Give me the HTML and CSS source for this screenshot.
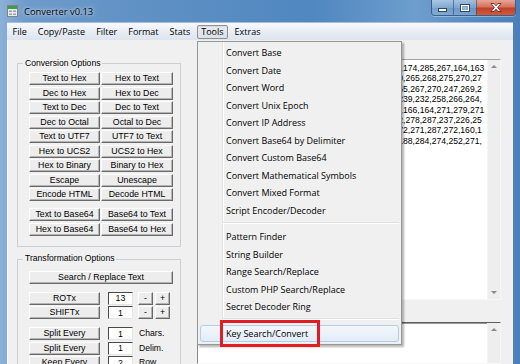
FILE: index.html
```html
<!DOCTYPE html>
<html lang="en">
<head>
    <meta charset="UTF-8">
    <title>Converter v0.13</title>
    <link rel="stylesheet" href="styles.css">
</head>
<body>
<div class="window">
    <div class="titlebar">
        <svg class="app-icon" width="11" height="12" viewBox="0 0 11 12">
            <rect x="0.5" y="0.5" width="10" height="11" fill="#e9ebec" stroke="#7d8386"/>
            <rect x="1" y="1" width="9" height="3" fill="#3f9d4a"/>
            <rect x="2" y="5.5" width="3" height="1.5" fill="#9aa1a5"/>
            <rect x="6" y="5.5" width="3" height="1.5" fill="#9aa1a5"/>
            <rect x="2" y="8.5" width="3" height="1.5" fill="#9aa1a5"/>
            <rect x="6" y="8.5" width="3" height="1.5" fill="#9aa1a5"/>
        </svg>
        <span class="title">Converter v0.13</span>
        <div class="caption">
            <span class="cap min"><svg width="9" height="4" viewBox="0 0 9 4"><rect x="0.5" y="0.5" width="8" height="3" fill="#fff" stroke="#33475e"/></svg></span>
            <span class="cap max"><svg width="10" height="8" viewBox="0 0 10 8"><rect x="0.5" y="0.5" width="9" height="7" fill="none" stroke="#33475e"/><rect x="1.5" y="1.5" width="7" height="5" fill="none" stroke="#fff"/><rect x="2.5" y="3" width="5" height="3" fill="#9fb6cf"/></svg></span>
            <span class="cap close"><svg width="12" height="9" viewBox="0 0 12 9"><path d="M1 0.5h3l2 2.3 2-2.3h3l-3.4 4 3.4 4h-3l-2-2.3-2 2.3h-3l3.4-4z" fill="#fff" stroke="#5a1d14" stroke-width="0.8"/></svg></span>
        </div>
    </div>
    <div class="frame">
        <div class="client">
            <ul class="menubar">
                <li>File</li>
                <li>Copy/Paste</li>
                <li>Filter</li>
                <li>Format</li>
                <li>Stats</li>
                <li class="open">Tools
                    <ul class="dropdown">
                        <li>Convert Base</li>
                        <li>Convert Date</li>
                        <li>Convert Word</li>
                        <li>Convert Unix Epoch</li>
                        <li>Convert IP Address</li>
                        <li>Convert Base64 by Delimiter</li>
                        <li>Convert Custom Base64</li>
                        <li>Convert Mathematical Symbols</li>
                        <li>Convert Mixed Format</li>
                        <li>Script Encoder/Decoder</li>
                        <li class="sep"></li>
                        <li>Pattern Finder</li>
                        <li>String Builder</li>
                        <li>Range Search/Replace</li>
                        <li>Custom PHP Search/Replace</li>
                        <li>Secret Decoder Ring</li>
                        <li class="sep"></li>
                        <li class="hover">Key Search/Convert<span class="mark"></span></li>
                    </ul>
                </li>
                <li>Extras</li>
            </ul>
            <div class="main">
                <div class="sidebar">
                    <div class="group">
                        <span class="group-title">Conversion Options</span>
                        <div class="btn-grid">
                            <button>Text to Hex</button><button>Hex to Text</button>
                            <button>Dec to Hex</button><button>Hex to Dec</button>
                            <button>Text to Dec</button><button>Dec to Text</button>
                            <button>Dec to Octal</button><button>Octal to Dec</button>
                            <button>Text to UTF7</button><button>UTF7 to Text</button>
                            <button>Hex to UCS2</button><button>UCS2 to Hex</button>
                            <button>Hex to Binary</button><button>Binary to Hex</button>
                            <button>Escape</button><button>Unescape</button>
                            <button>Encode HTML</button><button>Decode HTML</button>
                        </div>
                        <div class="btn-grid b64">
                            <button>Text to Base64</button><button>Base64 to Text</button>
                            <button>Hex to Base64</button><button>Base64 to Hex</button>
                        </div>
                    </div>
                    <div class="group trans">
                        <span class="group-title">Transformation Options</span>
                        <button class="wide">Search / Replace Text</button>
                        <div class="opt-grid">
                            <button>ROTx</button><input class="field" value="13"><button class="minus">-</button><button class="plus">+</button>
                            <button>SHIFTx</button><input class="field" value="1"><button class="minus">-</button><button class="plus">+</button>
                        </div>
                        <div class="opt-grid split">
                            <button>Split Every</button><input class="field" value="1"><span class="unit">Chars.</span>
                            <button>Split Every</button><input class="field" value="1"><span class="unit">Delim.</span>
                            <button>Keep Every</button><input class="field" value="2"><span class="unit">Row</span>
                        </div>
                    </div>
                </div>
                <div class="editors">
                    <div class="editor input">
                        <div class="text">
                            <div class="row"><span class="hid">266,271,259,248,270,262,281,273,266,259,</span>174,285,267,164,163</div>
                            <div class="row"><span class="hid">281,262,270,259,266,248,271,259,274,262,270</span>,265,268,275,270,27</div>
                            <div class="row"><span class="hid">262,270,281,266,259,248,273,266,270,262,26</span>5,267,270,247,269,2</div>
                            <div class="row"><span class="hid">259,266,248,271,259,274,262,270,281,266,2</span>39,232,258,266,264,</div>
                            <div class="row"><span class="hid">270,262,281,273,266,259,248,271,259,266,</span>166,164,271,279,271</div>
                            <div class="row"><span class="hid">248,271,259,274,262,270,281,266,259,270,262</span>,278,287,237,226,25</div>
                            <div class="row"><span class="hid">273,266,259,248,270,262,281,266,271,259,27</span>2,271,287,272,160,1</div>
                            <div class="row"><span class="hid">262,270,259,266,248,271,281,273,266,259,1</span>88,284,274,252,271,</div>
                        </div>
                        <div class="vscroll"><span class="arrow up"></span><span class="arrow down"></span></div>
                    </div>
                    <div class="editor output">
                        <div class="text"></div>
                        <div class="vscroll"><span class="arrow up"></span></div>
                    </div>
                </div>
            </div>
        </div>
    </div>
</div>
</body>
</html>
```

FILE: styles.css
```css
*{box-sizing:border-box;}
html,body{margin:0;padding:0;}
ul{margin:0;padding:0;list-style-type:none;}
body{
    width:520px;
    height:364px;
    overflow:hidden;
    font:9px "Open Sans",sans-serif;
    color:#000;
}
.window{
    height:364px;
    display:flex;
    flex-direction:column;
    background:linear-gradient(to right,#8cb1d8 0,#6e9bcb 5%,#5e90c4 30%,#5087c0 60%,#6d9ecd 80%,#5489c1 92%,#4a7fb8 100%);
}

/* title bar */
.titlebar{height:22px;display:flex;align-items:center;flex:none;}
.app-icon{margin:0 0 1px 7px;}
.title{
    margin-left:6px;
    font-size:9.4px;
    text-shadow:0 0 5px rgba(255,255,255,.8),0 0 2px rgba(255,255,255,.6);
}
.caption{
    display:flex;
    align-self:flex-start;
    margin:0 4px 0 auto;
    height:16px;
    border:1px solid #3d5f86;
    border-top:none;
    border-radius:0 0 4px 4px;
    overflow:hidden;
    box-shadow:0 1px 0 rgba(255,255,255,.35);
}
.cap{
    width:21px;
    display:flex;
    align-items:center;
    justify-content:center;
    background:linear-gradient(rgba(255,255,255,.45),rgba(255,255,255,.2) 50%,rgba(255,255,255,.08) 55%,rgba(255,255,255,.2));
    border-left:1px solid rgba(50,75,105,.6);
}
.cap.min{border-left:none;width:21px;padding-top:5px;}
.cap.max{width:23px;}
.cap.close{width:39px;background:linear-gradient(#e6a596,#d7735f 45%,#c1402a 55%,#d35a40);}

/* window client */
.frame{flex:1;padding:0 7px;display:flex;min-height:0;}
.client{
    flex:1;
    display:flex;
    flex-direction:column;
    background:#f0f0f0;
    box-shadow:inset 1px 0 0 #fbfcfd;
}
.menubar{
    position:relative;
    height:18px;
    flex:none;
    display:flex;
    align-items:center;
    background:linear-gradient(#f7f9fc,#e9eef5 50%,#dde4ee);
    border-top:1px solid #a9bdd3;
}
.menubar > li{
    margin:0 1.5px;
    padding:0 3px;
    height:14px;
    line-height:12px;
    border:1px solid transparent;
    border-radius:2px;
}
.menubar > li.open{
    border-color:#8c929a;
    background:linear-gradient(#e8ebef,#dce1e7);
    box-shadow:inset 0 1px 1px rgba(0,0,0,.08);
}

/* Tools dropdown */
.dropdown{
    position:absolute;
    left:190px;
    top:18px;
    width:205px;
    padding:2px 0;
    border:1px solid #979797;
    background:linear-gradient(to right,transparent 24px,#e2e3e3 24px,#e2e3e3 25px,#fff 25px,#fff 26px,transparent 26px),#f0f0f0;
    box-shadow:2px 2px 2px rgba(0,0,0,.3);
    z-index:5;
}
.dropdown li{
    position:relative;
    height:17.5px;
    line-height:15.5px;
    margin:0 2px;
    padding-left:25px;
    border:1px solid transparent;
    border-radius:3px;
    white-space:nowrap;
}
.dropdown li.sep{height:6.5px;margin-left:24px;border:none;padding:0;}
.dropdown li.sep:after{
    content:"";
    display:block;
    margin-top:2.5px;
    border-top:1px solid #e0e0e0;
    border-bottom:1px solid #fff;
}
.dropdown li.hover{
    border-color:#b3cdec;
    background:linear-gradient(#f3f7fc,#e3ecf8);
}
.mark{
    position:absolute;
    left:19px;
    top:-5.5px;
    width:100px;
    height:27px;
    border:3px solid #e31b22;
}

/* main area */
.main{flex:1;display:flex;min-height:0;}
.sidebar{width:190px;flex:none;padding:23px 0 0 10px;}
.group{
    width:164px;
    border:1px solid #c9d1d6;
    padding-bottom:10px;
    font-family:"Liberation Sans",Arial,sans-serif;
    font-size:8.6px;
}
.group-title{
    display:table;
    margin:-6.5px 0 0 5px;
    padding:0 2px;
    line-height:11px;
    background:#f0f0f0;
}
.group.trans{margin-top:12px;height:200px;}

button{
    display:block;
    height:13px;
    margin:0;
    padding:0;
    font:8.8px/11px "Liberation Sans",Arial,sans-serif;
    color:#000;
    background:#ededed;
    border:1px solid;
    border-color:#fff #6a6a6a #6a6a6a #fff;
    box-shadow:inset -1px -1px 0 #b4b4b4;
}
.btn-grid{
    display:grid;
    grid-template-columns:71px 72px;
    column-gap:1px;
    row-gap:1.5px;
    margin:3.5px 0 0 11px;
}
.btn-grid.b64{margin-top:7px;}
.wide{width:144px;margin:6.5px 0 0 11px;}

.opt-grid{
    display:grid;
    grid-template-columns:71px 33px 20px 17px;
    grid-auto-rows:13px;
    row-gap:1.5px;
    margin:8px 0 0 11px;
}
.opt-grid.split{grid-template-columns:71px 33px auto;}
.field{
    width:25px;
    height:13px;
    margin-left:8px;
    padding:0;
    font:8.8px/11px "Liberation Sans",Arial,sans-serif;
    text-align:center;
    color:#000;
    background:#fff;
    border:1px solid;
    border-color:#4a4a4a #e4e4e4 #e4e4e4 #4a4a4a;
    outline:none;
}
.minus{margin-left:5px;}
.plus{margin-left:2px;}
.unit{margin-left:6px;line-height:13px;white-space:nowrap;}

/* text editors */
.editors{
    flex:1;
    display:flex;
    flex-direction:column;
    padding:19px 12px 0 0;
}
.editor{
    display:flex;
    background:#fff;
    border:1px solid;
    border-color:#a5a5a5 #f7f7f7 #f7f7f7 #a5a5a5;
}
.editor.input{height:241px;}
.editor.output{flex:1;margin-top:22px;border-color:#5e5e5e #f7f7f7 #f7f7f7 #8a8a8a;box-shadow:inset 0 1px 0 #9a9a9a;}
.text{
    flex:1;
    padding:3px 0 0 3px;
    overflow:hidden;
    font:8.6px/10.4px "Liberation Sans",Arial,sans-serif;
    white-space:nowrap;
}
.hid{display:inline-block;width:202px;text-align:right;}
.vscroll{
    width:13px;
    flex:none;
    display:flex;
    flex-direction:column;
    justify-content:space-between;
    background:#eeeeee;
    border-left:1px solid #f4f4f4;
}
.arrow{height:14px;display:flex;align-items:center;justify-content:center;}
.arrow:before{content:"";border:3px solid transparent;}
.arrow.up:before{border-bottom:3px solid #8a8a8a;border-top-width:0;margin-top:-1px;}
.arrow.down:before{border-top:3px solid #8a8a8a;border-bottom-width:0;}
```
